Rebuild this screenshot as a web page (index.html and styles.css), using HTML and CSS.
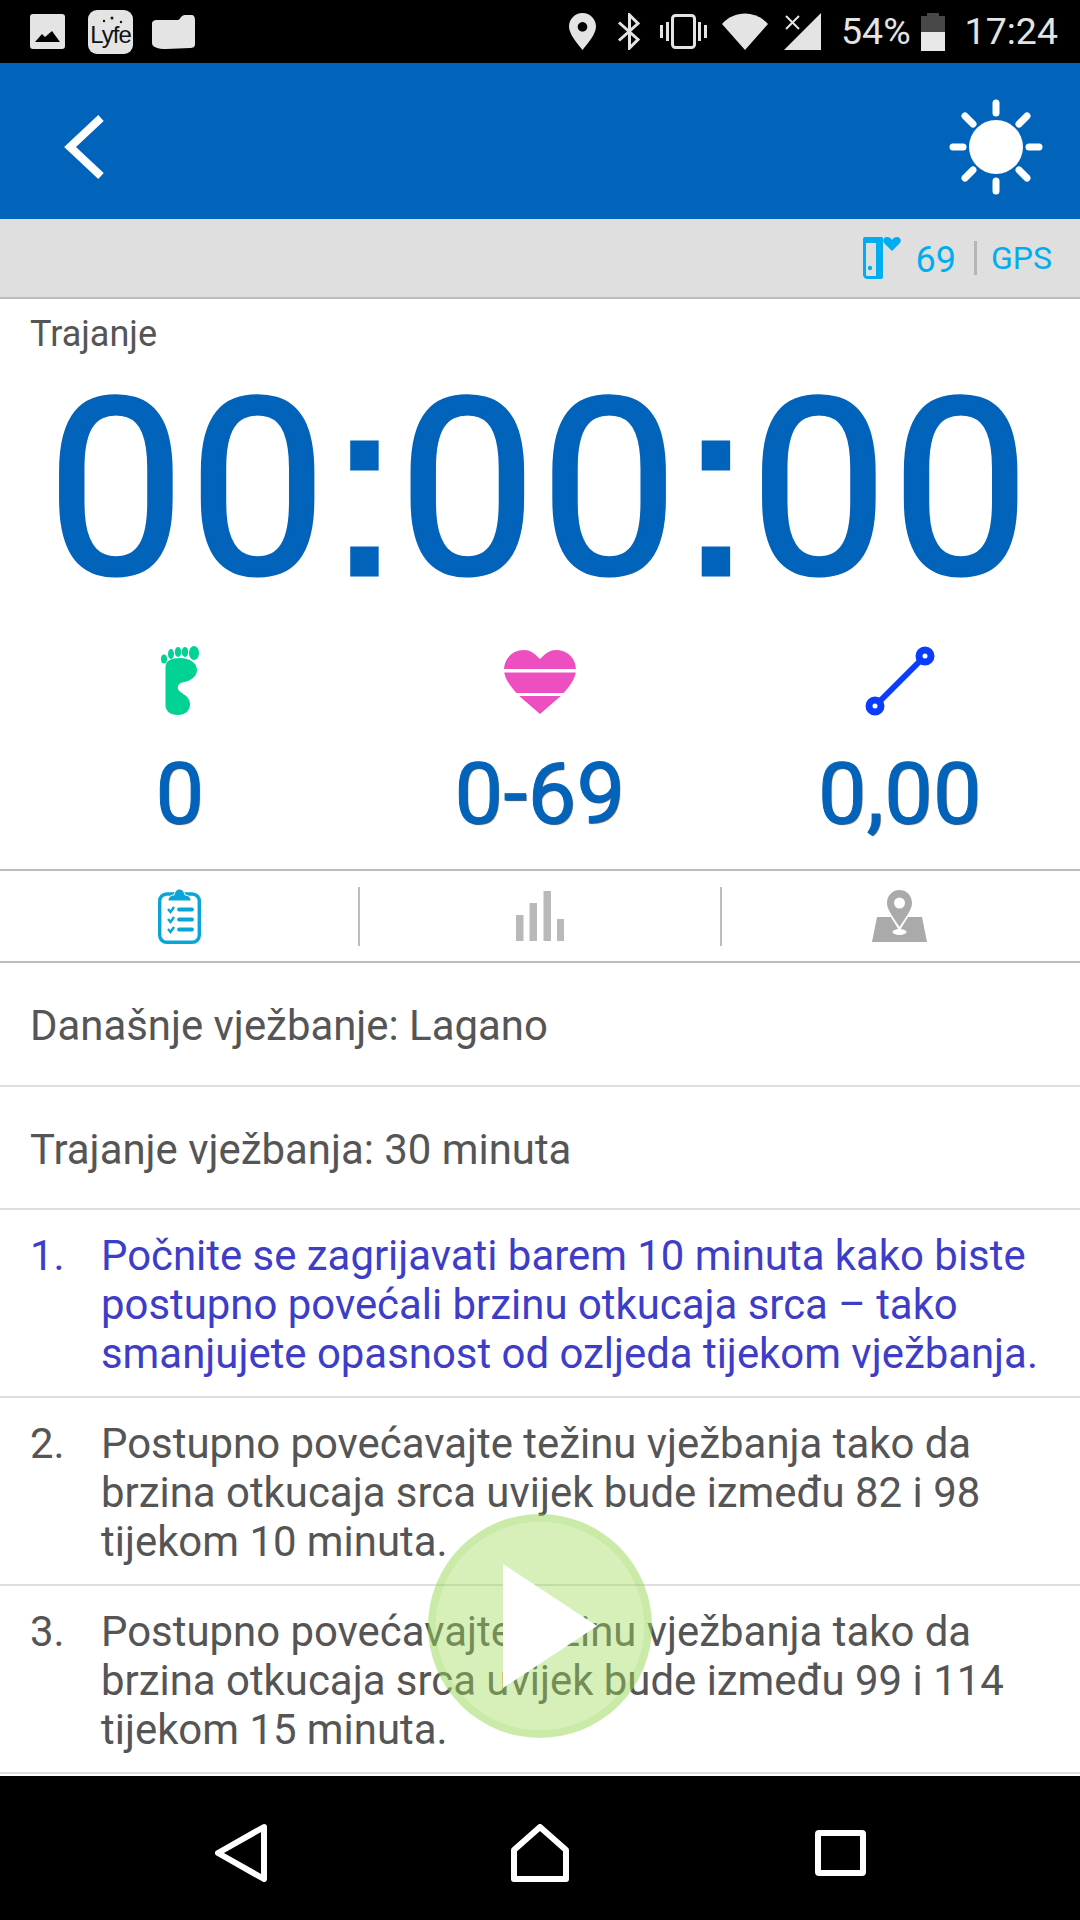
FILE: index.html
```html
<!DOCTYPE html>
<html lang="en">
  <head>
    <meta charset="UTF-8" />
    <title>Trajanje</title>
    <link rel="stylesheet" href="styles.css">
  </head>
  <body>
    <div class="screen">
      <div class="status-bar">
        <svg class="ic-pic" viewBox="0 0 35 35"><rect width="35" height="35" rx="3" fill="#e4e4e4"/><path d="M5 28 L12 20 L15 23 L22 17 L30 28Z" fill="#000"/></svg>
        <div class="life-box"><svg viewBox="0 0 45 44"><g fill="#111"><circle cx="24" cy="8" r="1.5"/><circle cx="16" cy="11" r="1.2"/><circle cx="33" cy="12" r="1.2"/></g><text x="22.5" y="33" class="life-text">Lyfe</text></svg></div>
        <svg class="ic-folder" viewBox="0 0 43 34"><path d="M5 5 H26 C28 5 29 0 33 0 H39 C42 0 43 2 43 5 V29 C43 32 41 33 38 33 L14 34 C6 34 0 32 0 28 V9 C0 6 2 5 5 5Z" fill="#e4e4e4"/></svg>
        <div class="status-right">
          <svg class="ic-pin" viewBox="0 0 27 37"><path fill-rule="evenodd" d="M13.5 0 C21 0 27 6 27 13.5 C27 21 19 30 13.5 37 C8 30 0 21 0 13.5 C0 6 6 0 13.5 0Z M13.5 9 a4.8 4.8 0 1 0 .01 0Z" fill="#e4e4e4"/></svg>
          <svg class="ic-bt" viewBox="0 0 24 37"><path d="M2 9.5 L21 26.5 L12.5 35 V2 L21 10.5 L2 27.5" fill="none" stroke="#e4e4e4" stroke-width="3"/></svg>
          <svg class="ic-vib" viewBox="0 0 47 35"><rect x="12.5" y="1.5" width="22" height="32" rx="3" fill="none" stroke="#e4e4e4" stroke-width="3"/><g fill="#e4e4e4"><rect x="6" y="8" width="3" height="19"/><rect x="0" y="11" width="3" height="13"/><rect x="38" y="8" width="3" height="19"/><rect x="44" y="11" width="3" height="13"/></g></svg>
          <svg class="ic-wifi" viewBox="0 0 46 37"><path d="M0 11 C12 -3 34 -3 46 11 L23 37Z" fill="#e4e4e4"/></svg>
          <svg class="ic-signal" viewBox="0 0 37 37"><path d="M37 0 V37 H0Z" fill="#e4e4e4"/><path d="M2 3 L15 16 M15 3 L2 16" stroke="#e4e4e4" stroke-width="2"/></svg>
          <span class="status-text pct">54%</span>
          <div class="battery"><div class="battery-cap"></div><div class="battery-empty"></div><div class="battery-full"></div></div>
          <span class="status-text">17:24</span>
        </div>
      </div>

      <div class="app-bar">
        <svg class="ic-back" viewBox="0 0 42 66"><path d="M37 4 L6 33 L37 62" fill="none" stroke="#fff" stroke-width="8"/></svg>
        <svg class="ic-sun" viewBox="0 0 94 96">
          <circle cx="47" cy="48" r="27" fill="#fff"/>
          <g stroke="#fff" stroke-width="7" stroke-linecap="round">
            <path d="M47 4 V14"/><path d="M47 82 V92"/><path d="M4 48 H14"/><path d="M80 48 H90"/>
            <path d="M16 17 L24 25"/><path d="M78 17 L70 25"/><path d="M16 79 L24 71"/><path d="M78 79 L70 71"/>
          </g>
        </svg>
      </div>

      <div class="info-bar">
        <svg class="ic-band" viewBox="0 0 38 42"><rect x="1.5" y="1.5" width="17" height="39" rx="3" fill="none" stroke="#00aeef" stroke-width="3"/><rect x="0" y="0" width="20" height="6" rx="2" fill="#00aeef"/><rect x="13" y="0" width="7" height="42" rx="2" fill="#00aeef"/><circle cx="7" cy="31" r="2.2" fill="#00aeef"/><path d="M29 14 L21 6 C19 3 21 0 24 0 C26 0 28 1 29 3 C30 1 32 0 34 0 C37 0 39 3 37 6Z" fill="#00aeef"/></svg>
        <span class="hr-val">69</span>
        <span class="info-sep"></span>
        <span class="gps">GPS</span>
      </div>

      <div class="timer-section">
        <div class="timer-label">Trajanje</div>
        <div class="timer">00<span class="colon">:</span>00<span class="colon">:</span>00</div>
        <div class="stats">
          <div class="stat">
            <svg class="ic-foot" viewBox="0 0 39 70"><g fill="#00d294"><ellipse cx="3" cy="13" rx="3" ry="4.5"/><ellipse cx="10" cy="8" rx="3" ry="5"/><ellipse cx="17" cy="6" rx="3.2" ry="5"/><ellipse cx="24" cy="6" rx="3.2" ry="5"/><ellipse cx="33" cy="7" rx="5" ry="7"/><path d="M4.5 21 C4.5 15 10 12 19 12 C29 12 36 17 36 24 C36 31 29 35 23 36 C18 37 16 40 17 43 C18 47 29 49 29 58 C29 65 24 69 17 69 C9 69 4.5 65 4.5 59Z"/></g></svg>
            <div class="stat-val">0</div>
          </div>
          <div class="stat">
            <svg class="ic-heart" viewBox="0 0 72 64"><path d="M36 9 C30 3 26 0 20 0 C8 0 0 9 0 20 C0 29 8 38 14 45 L36 64 L58 45 C64 38 72 29 72 20 C72 9 64 0 52 0 C46 0 42 3 36 9Z" fill="#ee4fc0"/><rect y="19" width="72" height="3.5" fill="#fff"/><rect y="43" width="72" height="3" fill="#fff"/></svg>
            <div class="stat-val">0-69</div>
          </div>
          <div class="stat">
            <svg class="ic-route" viewBox="0 0 70 70"><g fill="none" stroke="#0a3cff"><circle cx="10" cy="60" r="6" stroke-width="7"/><circle cx="60" cy="10" r="6" stroke-width="7"/><path d="M15 55 L55 15" stroke-width="6"/></g></svg>
            <div class="stat-val">0,00</div>
          </div>
        </div>
      </div>

      <div class="tabs">
        <div class="tab">
          <svg class="ic-clip" viewBox="0 0 43 55"><rect x="1.7" y="5" width="39.6" height="48.3" rx="7" fill="none" stroke="#0aa5d8" stroke-width="3.4"/><path d="M10 12 C10 8 13 6 16 6 C17 2 19 0 21.5 0 C24 0 26 2 27 6 C30 6 33 8 33 12Z" fill="#0aa5d8" stroke="#fff" stroke-width="1"/><g stroke="#0aa5d8" fill="none"><path d="M10 20 L12.5 23 L16 18" stroke-width="2.4"/><path d="M10 30 L12.5 33 L16 28" stroke-width="2.4"/><path d="M10 40 L12.5 43 L16 38" stroke-width="2.4"/><path d="M21 20.500 H34 M21 30.500 H34 M21 40.500 H34" stroke-width="3.800" stroke-linecap="round"/></g></svg>
        </div>
        <div class="tab">
          <svg class="ic-bars" viewBox="0 0 48 50"><g fill="#b9b9b9"><rect x="0" y="24" width="7.500" height="26"/><rect x="13.500" y="12" width="7.500" height="38"/><rect x="27.500" y="0" width="7.500" height="50"/><rect x="41" y="28" width="7" height="22"/></g></svg>
        </div>
        <div class="tab tab-map">
          <svg class="ic-map" viewBox="0 0 55 52"><path d="M5 27 H50 L55 52 H0Z" fill="#aaa"/><path d="M27.500 -1 C36 -1 41 6 41 13 C41 21 34 30 27.500 41 C21 30 14 21 14 13 C14 6 19 -1 27.500 -1Z" fill="#fff"/><path d="M27.500 0 C35 0 40 6 40 13 C40 20 33 28 27.500 37 C22 28 15 20 15 13 C15 6 20 0 27.500 0Z" fill="#aaa"/><circle cx="27.500" cy="13" r="5.500" fill="#fff"/><ellipse cx="27.500" cy="42" rx="7" ry="3" fill="#fff"/></svg>
        </div>
      </div>

      <div class="plan">
        <div class="plan-row">Današnje vježbanje: Lagano</div>
        <div class="plan-row plan-row-short">Trajanje vježbanja: 30 minuta</div>
        <div class="step step-active"><span class="step-no">1.</span><p>Počnite se zagrijavati barem 10 minuta kako biste postupno povećali brzinu otkucaja srca – tako smanjujete opasnost od ozljeda tijekom vježbanja.</p></div>
        <div class="step"><span class="step-no">2.</span><p>Postupno povećavajte težinu vježbanja tako da brzina otkucaja srca uvijek bude između 82 i 98 tijekom 10 minuta.</p></div>
        <div class="step"><span class="step-no">3.</span><p>Postupno povećavajte težinu vježbanja tako da brzina otkucaja srca uvijek bude između 99 i 114 tijekom 15 minuta.</p></div>
      </div>

      <div class="nav-bar">
        <svg class="ic-nav-back" viewBox="0 0 54 58"><path d="M50 3 L4 29 L50 55Z" fill="none" stroke="#fff" stroke-width="6" stroke-linejoin="round"/></svg>
        <svg class="ic-nav-home" viewBox="0 0 58 58"><path d="M3 26 L29 3 L55 26 V55 H3Z" fill="none" stroke="#fff" stroke-width="6" stroke-linejoin="round"/></svg>
        <svg class="ic-nav-recent" viewBox="0 0 51 46"><rect x="3" y="3" width="45" height="40" rx="1" fill="none" stroke="#fff" stroke-width="6" stroke-linejoin="round"/></svg>
      </div>

      <button class="play"><svg viewBox="0 0 94 124"><path d="M0 0 L94 62 L0 124Z" fill="#fff"/></svg></button>
    </div>
  </body>
</html>
```

FILE: styles.css
```css
* {
  box-sizing: border-box;
}

body {
  margin: 0;
  padding: 0;
  font-family: Roboto, "Liberation Sans", sans-serif;
  background-color: #ffffff;
  color: #555;
}

svg {
  display: block;
  flex: none;
}

.screen {
  position: relative;
  width: 1080px;
  height: 1920px;
  display: flex;
  flex-direction: column;
  overflow: hidden;
}

/* status bar */
.status-bar {
  height: 63px;
  background-color: #000;
  display: flex;
  align-items: center;
  padding-left: 30px;
  padding-right: 22px;
}

.ic-pic {
  width: 35px;
  height: 35px;
}

.life-box {
  width: 45px;
  height: 44px;
  margin-left: 23px;
  border-radius: 9px;
  background-color: #e4e4e4;
}

.life-text {
  font-family: "Liberation Sans", sans-serif;
  font-size: 24px;
  letter-spacing: -1px;
  text-anchor: middle;
  fill: #111;
}

.ic-folder {
  width: 43px;
  height: 34px;
  margin-left: 19px;
}

.status-right {
  margin-left: auto;
  display: flex;
  align-items: center;
}

.ic-pin {
  width: 27px;
  height: 37px;
}

.ic-bt {
  width: 24px;
  height: 37px;
  margin-left: 21px;
}

.ic-vib {
  width: 47px;
  height: 35px;
  margin-left: 19px;
}

.ic-wifi {
  width: 46px;
  height: 37px;
  margin-left: 15px;
}

.ic-signal {
  width: 37px;
  height: 37px;
  margin-left: 16px;
}

.status-text {
  font-size: 37.5px;
  line-height: 63px;
  color: #e4e4e4;
}

.pct {
  margin-left: 20px;
}

.battery {
  width: 24px;
  height: 38px;
  margin-left: 10px;
  margin-right: 20px;
  display: flex;
  flex-direction: column;
  align-items: center;
}

.battery-cap {
  width: 12px;
  height: 3px;
  background-color: #484848;
}

.battery-empty {
  width: 24px;
  height: 16px;
  background-color: #484848;
}

.battery-full {
  width: 24px;
  height: 19px;
  background-color: #e8e8e8;
}

/* app bar */
.app-bar {
  height: 156px;
  background-color: #0263bb;
  display: flex;
  align-items: center;
  justify-content: space-between;
  padding-top: 12px;
  padding-left: 64px;
  padding-right: 37px;
}

.ic-back {
  width: 42px;
  height: 66px;
}

.ic-sun {
  width: 94px;
  height: 96px;
}

/* heart rate and gps bar */
.info-bar {
  height: 80px;
  background-color: #dfdfdf;
  border-bottom: 2px solid #bdbdbd;
  display: flex;
  align-items: center;
  justify-content: flex-end;
  padding-right: 28px;
  color: #00aeef;
}

.ic-band {
  width: 38px;
  height: 42px;
}

.hr-val {
  font-size: 36px;
  margin-left: 15px;
  padding-top: 4px;
}

.info-sep {
  width: 3px;
  height: 34px;
  margin-left: 18px;
  margin-right: 14px;
  background-color: #b5b5b5;
}

.gps {
  font-size: 32px;
}

/* timer */
.timer-section {
  height: 572px;
  border-bottom: 2px solid #bdbdbd;
}

.timer-label {
  font-size: 36px;
  line-height: 40px;
  padding-left: 30px;
  padding-top: 15px;
}

.timer {
  height: 250px;
  margin-top: 11px;
  font-size: 246px;
  line-height: 250px;
  letter-spacing: 3.5px;
  text-align: center;
  color: #0263bb;
  -webkit-text-stroke: 3px #0263bb;
  text-shadow: 1px 1px 1px #555;
}

.colon {
  display: inline-block;
  width: 68px;
  line-height: 1;
  text-align: center;
  letter-spacing: 0;
  font-family: "Liberation Sans", sans-serif;
  -webkit-text-stroke: 5px #0263bb;
}

.stats {
  display: grid;
  grid-template-columns: repeat(3, 1fr);
  margin-top: 31px;
}

.stat {
  display: flex;
  flex-direction: column;
  align-items: center;
}

.ic-foot {
  width: 39px;
  height: 70px;
}

.ic-heart {
  width: 72px;
  height: 64px;
  margin-top: 4px;
  margin-bottom: 2px;
}

.ic-route {
  width: 70px;
  height: 70px;
}

.stat-val {
  font-size: 86px;
  line-height: 100px;
  margin-top: 28px;
  letter-spacing: 0.5px;
  color: #0263bb;
  -webkit-text-stroke: 1px #0263bb;
  text-shadow: 1px 1px 1px #555;
}

/* tabs */
.tabs {
  height: 92px;
  border-bottom: 2px solid #bdbdbd;
  display: grid;
  grid-template-columns: 358px 362px 360px;
  align-items: center;
}

.tab {
  height: 59px;
  display: flex;
  align-items: center;
  justify-content: center;
  border-left: 2px solid #bdbdbd;
}

.tab:first-child {
  border-left: none;
}

.tab-map {
  padding-right: 3px;
}

.ic-clip {
  width: 43px;
  height: 55px;
}

.ic-bars {
  width: 48px;
  height: 50px;
}

.ic-map {
  width: 55px;
  height: 52px;
}

/* workout plan */
.plan {
  flex: 1;
  font-size: 41.9px;
  overflow: hidden;
}

.plan-row {
  height: 124px;
  line-height: 126px;
  padding-left: 30px;
  border-bottom: 2px solid #dedede;
}

.plan-row-short {
  height: 123px;
}

.step {
  height: 188px;
  padding-top: 21px;
  padding-left: 30px;
  padding-right: 30px;
  line-height: 49px;
  display: flex;
  border-bottom: 2px solid #dedede;
}

.step p {
  margin: 0;
}

.step-no {
  width: 71px;
  flex: none;
}

.step-active {
  color: #3d3dc8;
}

/* android nav bar */
.nav-bar {
  height: 144px;
  background-color: #000;
  display: flex;
  align-items: center;
  padding-top: 9px;
  padding-left: 214px;
}

.ic-nav-back {
  width: 54px;
  height: 58px;
}

.ic-nav-home {
  width: 58px;
  height: 58px;
  margin-left: 243px;
}

.ic-nav-recent {
  width: 51px;
  height: 46px;
  margin-left: 246px;
}

/* play button sits over the list */
.play {
  position: absolute;
  left: 428px;
  top: 1514px;
  width: 224px;
  height: 224px;
  padding: 0;
  border: 8px solid rgba(150, 215, 80, 0.5);
  border-radius: 50%;
  background-color: rgba(160, 220, 90, 0.42);
  background-clip: padding-box;
  display: flex;
  align-items: center;
  justify-content: center;
}

.play svg {
  width: 94px;
  height: 124px;
  margin-left: 19px;
}
```
